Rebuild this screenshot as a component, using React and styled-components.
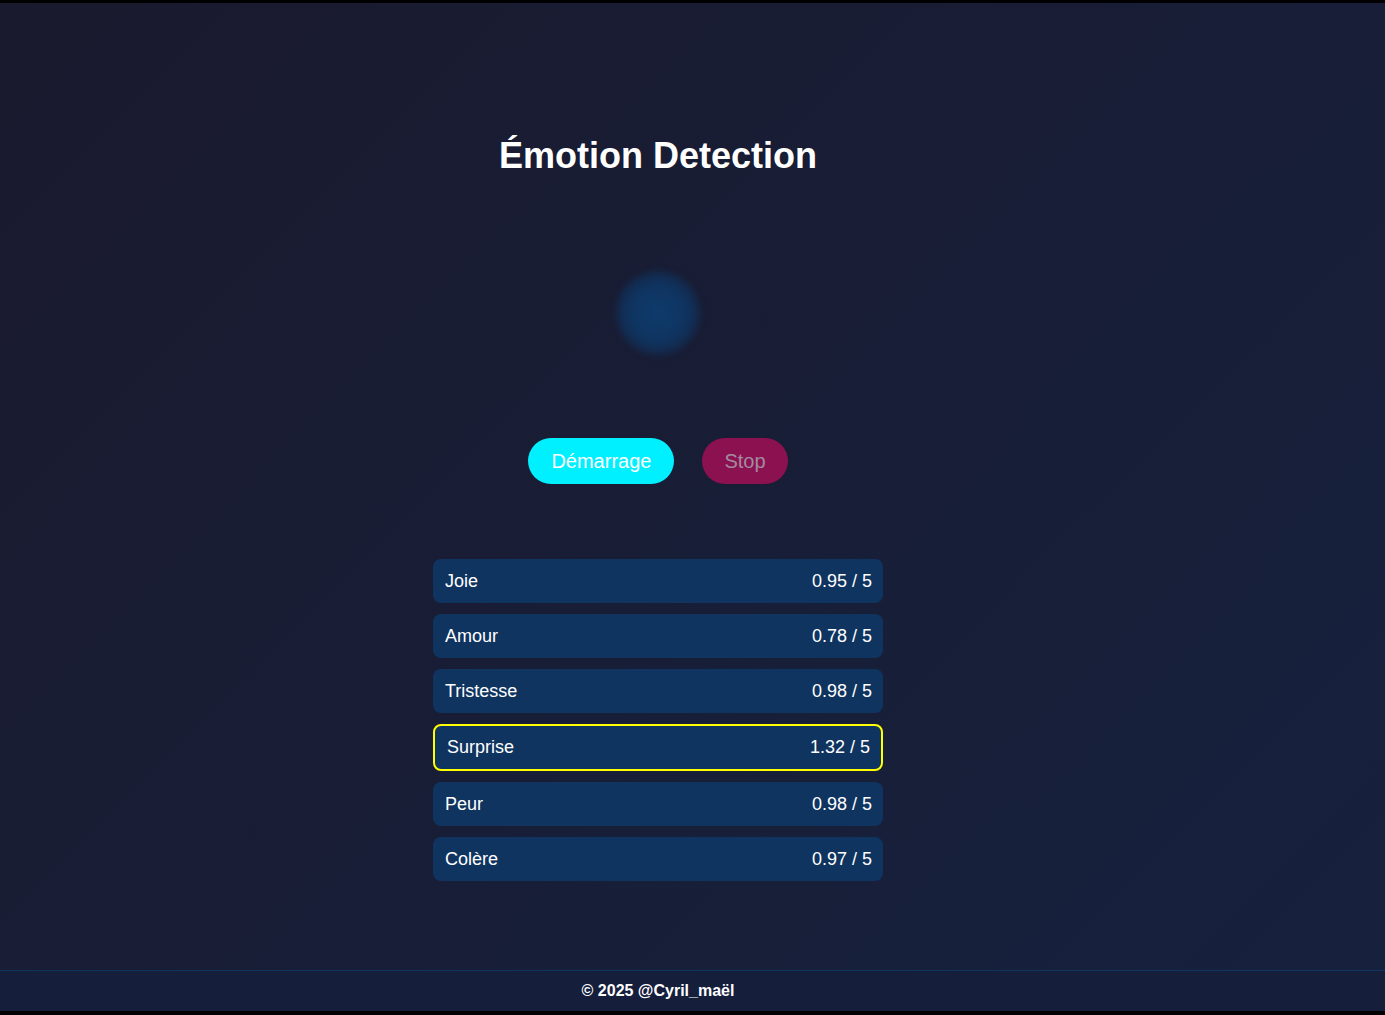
import React from "react";
import styled, { createGlobalStyle } from "styled-components";

const GlobalStyle = createGlobalStyle`
  html, body {
    margin: 0;
    padding: 0;
    background: #000;
  }
  body {
    font-family: "Liberation Sans", Arial, sans-serif;
  }
`;

const Page = styled.div`
  margin-top: 3px;
  height: 1008px;
  display: flex;
  flex-direction: column;
  background: linear-gradient(135deg, #1a1a2e 0%, #16213e 100%);
  color: #fff;
`;

const Main = styled.main`
  flex: 1;
  width: calc(100% - 69px);
  display: flex;
  flex-direction: column;
  align-items: center;
`;

const Title = styled.h1`
  margin: 132px 0 0;
  font-size: 36px;
  font-weight: 700;
  line-height: 41px;
`;

const Orb = styled.div`
  margin-top: 95px;
  width: 84px;
  height: 84px;
  border-radius: 50%;
  background: radial-gradient(circle, #0e3a6a 0%, #0f3562 45%, rgba(15, 52, 96, 0.6) 65%, rgba(15, 52, 96, 0) 100%);
  filter: blur(3px);
`;

const Controls = styled.div`
  margin-top: 83px;
  display: flex;
  gap: 28px;
`;

const Button = styled.button`
  height: 46px;
  padding: 0 ${(p) => (p.$variant === "stop" ? "22px" : "23px")};
  border: none;
  border-radius: 23px;
  font-family: "Liberation Sans", Arial, sans-serif;
  font-size: 20px;
  line-height: 44px;
  cursor: pointer;
  background: ${(p) => (p.$variant === "stop" ? "#8c1150" : "#00f0ff")};
  color: ${(p) => (p.$variant === "stop" ? "#a48aa0" : "#fff")};
`;

const List = styled.div`
  margin-top: 75px;
  width: 450px;
  display: flex;
  flex-direction: column;
  gap: 11px;
`;

const Row = styled.div`
  display: flex;
  justify-content: space-between;
  align-items: center;
  box-sizing: border-box;
  height: ${(p) => (p.$active ? "47px" : "44px")};
  padding: 0 11px 0 12px;
  border-radius: 8px;
  background: #0f3460;
  border: ${(p) => (p.$active ? "2px solid #ffff00" : "none")};
  font-size: 18px;
`;

const Footer = styled.footer`
  height: 40px;
  border-top: 1px solid #0f3460;
  background: #151e3b;
  width: 100%;
`;

const FooterText = styled.p`
  margin: 0;
  width: calc(100% - 69px);
  text-align: center;
  line-height: 40px;
  font-size: 16px;
  font-weight: 700;
`;

const emotions = [
  { name: "Joie", score: "0.95" },
  { name: "Amour", score: "0.78" },
  { name: "Tristesse", score: "0.98" },
  { name: "Surprise", score: "1.32", active: true },
  { name: "Peur", score: "0.98" },
  { name: "Colère", score: "0.97" },
];

export default function App() {
  return (
    <>
      <GlobalStyle />
      <Page>
        <Main>
          <Title>Émotion Detection</Title>
          <Orb />
          <Controls>
            <Button>Démarrage</Button>
            <Button $variant="stop">Stop</Button>
          </Controls>
          <List>
            {emotions.map((e) => (
              <Row key={e.name} $active={e.active}>
                <span>{e.name}</span>
                <span>{e.score} / 5</span>
              </Row>
            ))}
          </List>
        </Main>
        <Footer>
          <FooterText>© 2025 @Cyril_maël</FooterText>
        </Footer>
      </Page>
    </>
  );
}
